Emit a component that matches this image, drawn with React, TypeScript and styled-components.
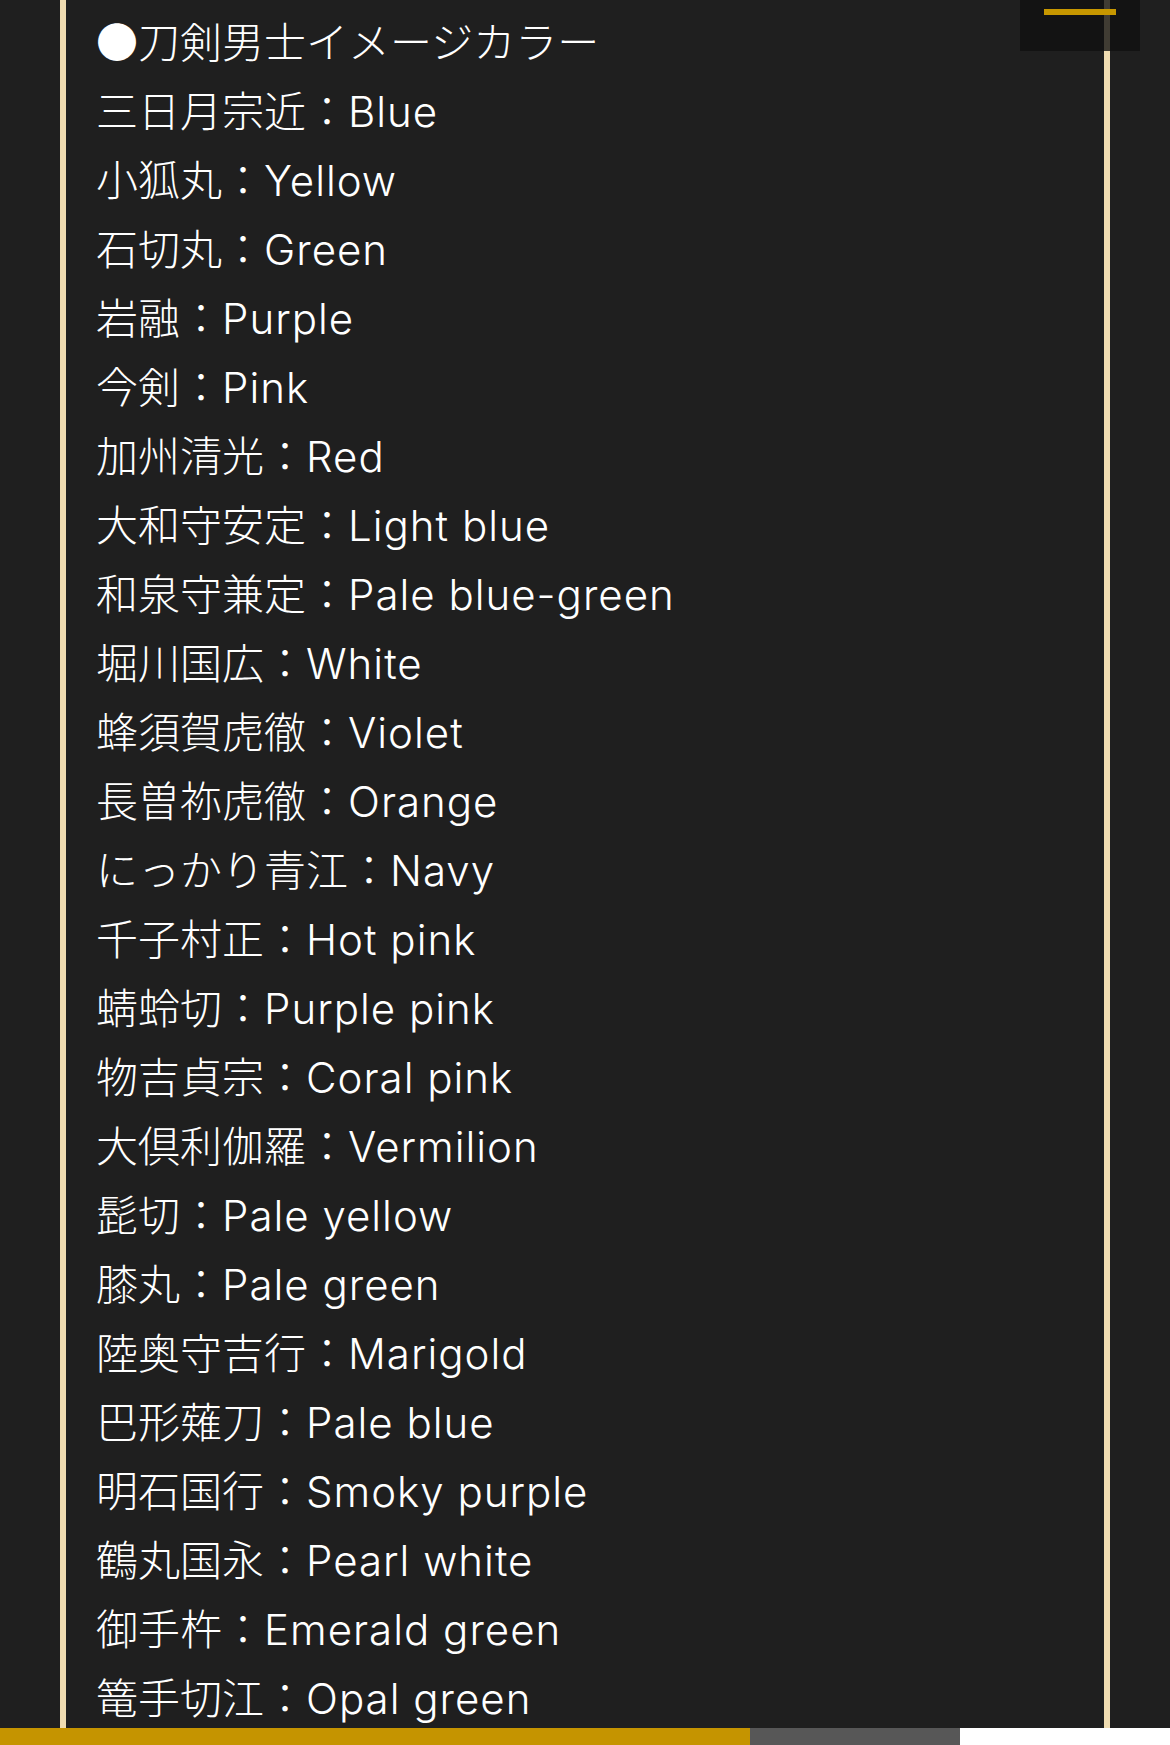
import styled, { createGlobalStyle } from 'styled-components';

const GlobalStyle = createGlobalStyle`
  html, body {
    margin: 0;
    padding: 0;
    background-color: #1f1f1f;
  }
  body {
    font-family: "Noto Sans CJK JP", "Noto Sans", sans-serif;
    color: #fff;
  }
`;

const Page = styled.div`
  min-height: 100vh;
  padding: 0 60px;
`;

const Frame = styled.section`
  box-sizing: border-box;
  width: 1050px;
  min-height: 100vh;
  padding: 5px 0 0 30px;
  border-left: 6px solid #efdcb1;
  border-right: 6px solid #efdcb1;
`;

const Line = styled.p`
  margin: 0;
  height: 69px;
  font-size: 42px;
  font-weight: 300;
  line-height: 69px;
  white-space: nowrap;
`;

const Colour = styled.span`
  font-family: "Inter", "Noto Sans CJK JP", sans-serif;
  font-weight: 300;
  letter-spacing: 1px;
  line-height: 1;
`;

const MenuButton = styled.button`
  position: fixed;
  top: 0;
  right: 30px;
  width: 120px;
  height: 51px;
  padding: 9px 0 0;
  border: none;
  background: rgba(17, 17, 17, 0.79);
  display: flex;
  justify-content: center;
  align-items: flex-start;
`;

const MenuBar = styled.span`
  width: 72px;
  height: 6px;
  background-color: #c79700;
`;

const Progress = styled.div`
  position: fixed;
  left: 0;
  right: 0;
  bottom: 0;
  height: 17px;
  display: flex;
`;

const Segment = styled.div<{ $w: number; $color: string }>`
  width: ${(p) => p.$w}px;
  background-color: ${(p) => p.$color};
`;

const colours: [string, string][] = [
  ['三日月宗近', 'Blue'],
  ['小狐丸', 'Yellow'],
  ['石切丸', 'Green'],
  ['岩融', 'Purple'],
  ['今剣', 'Pink'],
  ['加州清光', 'Red'],
  ['大和守安定', 'Light blue'],
  ['和泉守兼定', 'Pale blue-green'],
  ['堀川国広', 'White'],
  ['蜂須賀虎徹', 'Violet'],
  ['長曽祢虎徹', 'Orange'],
  ['にっかり青江', 'Navy'],
  ['千子村正', 'Hot pink'],
  ['蜻蛉切', 'Purple pink'],
  ['物吉貞宗', 'Coral pink'],
  ['大倶利伽羅', 'Vermilion'],
  ['髭切', 'Pale yellow'],
  ['膝丸', 'Pale green'],
  ['陸奥守吉行', 'Marigold'],
  ['巴形薙刀', 'Pale blue'],
  ['明石国行', 'Smoky purple'],
  ['鶴丸国永', 'Pearl white'],
  ['御手杵', 'Emerald green'],
  ['篭手切江', 'Opal green'],
];

const App = () => {
  return (
    <>
      <GlobalStyle />
      <Page>
        <Frame>
          <Line>●刀剣男士イメージカラー</Line>
          {colours.map(([name, colour]) => (
            <Line key={name}>
              {name}：<Colour>{colour}</Colour>
            </Line>
          ))}
        </Frame>
      </Page>
      <MenuButton aria-label="menu">
        <MenuBar />
      </MenuButton>
      <Progress>
        <Segment $w={750} $color="#c59400" />
        <Segment $w={210} $color="#575757" />
        <Segment $w={210} $color="#ffffff" />
      </Progress>
    </>
  );
};

export default App;
